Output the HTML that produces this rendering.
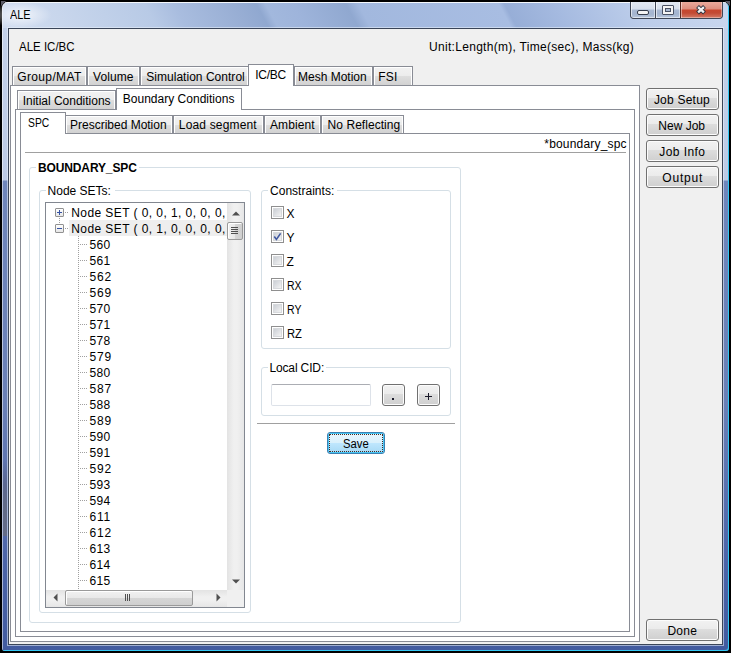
<!DOCTYPE html>
<html><head><meta charset="utf-8"><style>
html,body{margin:0;padding:0;}
.tx{position:absolute;white-space:nowrap;}
body{width:731px;height:653px;position:relative;overflow:hidden;background:#000;font-family:"Liberation Sans",sans-serif;font-size:12px;}
</style></head><body><div style="position:absolute;left:2px;top:2px;width:727px;height:649px;border-radius:6px 6px 3px 3px;overflow:hidden;background:linear-gradient(to bottom,#c4d2ea 0px,#bccae5 178px,#6f86bb 179px,#6a80b6 400px,#4c64a8 560px,#425b9f 649px);box-shadow: inset 1px 1px 0 rgba(255,255,255,0.55), inset -1px -1px 0 #34c8f4;"></div><div style="position:absolute;left:3px;top:460px;width:4px;height:76px;box-sizing:border-box;background:linear-gradient(to bottom,rgba(90,105,160,0) 0px,#5c6890 25px,#616a86 45px,#646c88 75px);"></div><div style="position:absolute;left:1px;top:1px;width:0;height:0;border-top:5px solid #5a5a66;border-right:5px solid transparent"></div><div style="position:absolute;left:725px;top:1px;width:0;height:0;border-top:5px solid #5a5a66;border-left:5px solid transparent"></div><div style="position:absolute;left:3px;top:3px;width:725px;height:25px;border-radius:5px 5px 0 0;background:linear-gradient(62deg,#d0dcf0 3px,#c8d6ec 56px,#b8cae6 136px,#a9bddf 162px,#98aed4 215px,#90a8d0 235px,#a2b8dd 243px,#9eb4db 268px,#90a8d0 314px,#a2b8de 325px,#a8bde2 449px,#97aed7 454px,#a5bae0 498px,#bccdea 568px,#c8d6ee 643px);"></div><div style="position:absolute;left:-10px;top:0px;width:70px;height:30px;background:radial-gradient(ellipse 32px 13px at 30px 15px,rgba(255,255,255,0.75),rgba(255,255,255,0) 100%);"></div><div style="position:absolute;left:5px;top:2px;width:721px;height:1px;box-sizing:border-box;background:rgba(255,255,255,0.6);"></div><div style="position:absolute;left:7px;top:27px;width:717px;height:619px;box-sizing:border-box;border:1px solid rgba(235,242,252,0.55);"></div><div style="position:absolute;left:8px;top:28px;width:715px;height:617px;box-sizing:border-box;border:1px solid #3a4558;background:#f0f0f0;"></div><div id="t0" class="tx" style="left:9.70px;top:9.42px;font-size:12.5px;line-height:12.5px;transform:scaleX(0.8723);transform-origin:0 0;color:#000">ALE</div><div style="position:absolute;left:630px;top:2px;width:93px;height:17px;box-sizing:border-box;border:1px solid #3e4656;border-top:none;border-radius:0 0 4px 4px;overflow:hidden;background:#3e4656"><div style="position:absolute;left:0;top:0;width:24px;height:16px;background:linear-gradient(to bottom,#e3e9f3 0px,#d6dfec 7px,#a9b9d3 8px,#a3b4cf 12px,#b9c7dd 16px);box-shadow:inset 1px 0 0 rgba(255,255,255,.6),inset -1px -1px 0 rgba(255,255,255,.5)"></div><div style="position:absolute;left:25px;top:0;width:24px;height:16px;background:linear-gradient(to bottom,#e3e9f3 0px,#d6dfec 7px,#a9b9d3 8px,#a3b4cf 12px,#b9c7dd 16px);box-shadow:inset 1px 0 0 rgba(255,255,255,.6),inset -1px -1px 0 rgba(255,255,255,.5)"></div><div style="position:absolute;left:49px;top:0;width:1px;height:16px;background:#5a2a22"></div><div style="position:absolute;left:50px;top:0;width:41px;height:16px;background:linear-gradient(to bottom,#e9aa9c 0px,#dc8e7e 7px,#c7472f 8px,#c24a34 11px,#d47a66 16px);box-shadow:inset 1px 0 0 rgba(255,255,255,.45),inset -1px -1px 0 rgba(255,255,255,.35)"></div></div><div style="position:absolute;left:637px;top:10px;width:12px;height:5px;box-sizing:border-box;background:#f4f4f4;border:1px solid #343c4c;border-radius:2px;"></div><div style="position:absolute;left:662px;top:5px;width:12px;height:10px;box-sizing:border-box;border:1px solid #4a5264;background:#f4f4f4;border-radius:1px;"></div><div style="position:absolute;left:665px;top:8px;width:6px;height:4px;box-sizing:border-box;border:1px solid #4a5264;background:#a8b8d0;"></div><svg style="position:absolute;left:694px;top:3px" width="15" height="14" viewBox="0 0 15 14"><path d="M3.5 3.5 L10.5 10 M10.5 3.5 L3.5 10" stroke="#2f3440" stroke-width="4.2" fill="none" stroke-linecap="butt"/><path d="M4.1 4.1 L9.9 9.4 M9.9 4.1 L4.1 9.4" stroke="#f2f2f2" stroke-width="2.3" fill="none" stroke-linecap="butt"/></svg><div id="t1" class="tx" style="left:19.40px;top:41.34px;font-size:12px;line-height:12px;transform:scaleX(0.9580);transform-origin:0 0;color:#000">ALE IC/BC</div><div id="t2" class="tx" style="left:429.10px;top:41.24px;font-size:12px;line-height:12px;letter-spacing:0.294px;color:#000">Unit:Length(m), Time(sec), Mass(kg)</div><div style="position:absolute;left:10px;top:85px;width:630px;height:557px;box-sizing:border-box;border:1px solid #898c95;background:#fff;"></div><div style="position:absolute;left:12px;top:66px;width:75px;height:19px;box-sizing:border-box;border:1px solid #898c95;border-bottom:none;background:linear-gradient(to bottom,#f2f2f2 0px,#ececec 9px,#dedede 9px,#d2d2d2 100%);box-shadow:inset 1px 1px 0 #fff,inset -1px 0 0 #fff;"></div><div id="t3" class="tx" style="left:17.20px;top:70.84px;font-size:12px;line-height:12px;letter-spacing:0.375px;color:#000">Group/MAT</div><div style="position:absolute;left:87px;top:66px;width:53px;height:19px;box-sizing:border-box;border:1px solid #898c95;border-bottom:none;background:linear-gradient(to bottom,#f2f2f2 0px,#ececec 9px,#dedede 9px,#d2d2d2 100%);box-shadow:inset 1px 1px 0 #fff,inset -1px 0 0 #fff;"></div><div id="t4" class="tx" style="left:93.10px;top:70.84px;font-size:12px;line-height:12px;letter-spacing:0.080px;color:#000">Volume</div><div style="position:absolute;left:140px;top:66px;width:109px;height:19px;box-sizing:border-box;border:1px solid #898c95;border-bottom:none;background:linear-gradient(to bottom,#f2f2f2 0px,#ececec 9px,#dedede 9px,#d2d2d2 100%);box-shadow:inset 1px 1px 0 #fff,inset -1px 0 0 #fff;"></div><div id="t5" class="tx" style="left:146.30px;top:70.84px;font-size:12px;line-height:12px;letter-spacing:0.024px;color:#000">Simulation Control</div><div style="position:absolute;left:294px;top:66px;width:79px;height:19px;box-sizing:border-box;border:1px solid #898c95;border-bottom:none;background:linear-gradient(to bottom,#f2f2f2 0px,#ececec 9px,#dedede 9px,#d2d2d2 100%);box-shadow:inset 1px 1px 0 #fff,inset -1px 0 0 #fff;"></div><div id="t6" class="tx" style="left:298.00px;top:70.84px;font-size:12px;line-height:12px;color:#000">Mesh Motion</div><div style="position:absolute;left:373px;top:66px;width:40px;height:19px;box-sizing:border-box;border:1px solid #898c95;border-bottom:none;background:linear-gradient(to bottom,#f2f2f2 0px,#ececec 9px,#dedede 9px,#d2d2d2 100%);box-shadow:inset 1px 1px 0 #fff,inset -1px 0 0 #fff;"></div><div id="t7" class="tx" style="left:378.20px;top:70.84px;font-size:12px;line-height:12px;letter-spacing:0.300px;color:#000">FSI</div><div style="position:absolute;left:248px;top:64px;width:46px;height:22px;box-sizing:border-box;border:1px solid #898c95;border-bottom:none;background:#fff;"></div><div id="t8" class="tx" style="left:255.20px;top:68.84px;font-size:12px;line-height:12px;letter-spacing:-0.250px;color:#000">IC/BC</div><div style="position:absolute;left:15px;top:109px;width:620px;height:528px;box-sizing:border-box;border:1px solid #898c95;background:#fff;"></div><div style="position:absolute;left:17px;top:90px;width:99px;height:19px;box-sizing:border-box;border:1px solid #898c95;border-bottom:none;background:linear-gradient(to bottom,#f2f2f2 0px,#ececec 9px,#dedede 9px,#d2d2d2 100%);box-shadow:inset 1px 1px 0 #fff,inset -1px 0 0 #fff;"></div><div id="t9" class="tx" style="left:22.70px;top:95.34px;font-size:12px;line-height:12px;letter-spacing:-0.011px;color:#000">Initial Conditions</div><div style="position:absolute;left:116px;top:88px;width:126px;height:22px;box-sizing:border-box;border:1px solid #898c95;border-bottom:none;background:#fff;"></div><div id="t10" class="tx" style="left:122.80px;top:93.34px;font-size:12px;line-height:12px;letter-spacing:0.011px;color:#000">Boundary Conditions</div><div style="position:absolute;left:20px;top:133px;width:610px;height:499px;box-sizing:border-box;border:1px solid #898c95;background:#fff;"></div><div style="position:absolute;left:65px;top:115px;width:108px;height:18px;box-sizing:border-box;border:1px solid #898c95;border-bottom:none;background:linear-gradient(to bottom,#f2f2f2 0px,#ececec 9px,#dedede 9px,#d2d2d2 100%);box-shadow:inset 1px 1px 0 #fff,inset -1px 0 0 #fff;"></div><div id="t11" class="tx" style="left:70.10px;top:118.94px;font-size:12px;line-height:12px;letter-spacing:-0.012px;color:#000">Prescribed Motion</div><div style="position:absolute;left:173px;top:115px;width:91px;height:18px;box-sizing:border-box;border:1px solid #898c95;border-bottom:none;background:linear-gradient(to bottom,#f2f2f2 0px,#ececec 9px,#dedede 9px,#d2d2d2 100%);box-shadow:inset 1px 1px 0 #fff,inset -1px 0 0 #fff;"></div><div id="t12" class="tx" style="left:178.80px;top:118.94px;font-size:12px;line-height:12px;letter-spacing:0.164px;color:#000">Load segment</div><div style="position:absolute;left:264px;top:115px;width:57px;height:18px;box-sizing:border-box;border:1px solid #898c95;border-bottom:none;background:linear-gradient(to bottom,#f2f2f2 0px,#ececec 9px,#dedede 9px,#d2d2d2 100%);box-shadow:inset 1px 1px 0 #fff,inset -1px 0 0 #fff;"></div><div id="t13" class="tx" style="left:270.00px;top:118.94px;font-size:12px;line-height:12px;letter-spacing:0.100px;color:#000">Ambient</div><div style="position:absolute;left:321px;top:115px;width:83px;height:18px;box-sizing:border-box;border:1px solid #898c95;border-bottom:none;background:linear-gradient(to bottom,#f2f2f2 0px,#ececec 9px,#dedede 9px,#d2d2d2 100%);box-shadow:inset 1px 1px 0 #fff,inset -1px 0 0 #fff;"></div><div id="t14" class="tx" style="left:327.60px;top:118.94px;font-size:12px;line-height:12px;letter-spacing:0.050px;color:#000">No Reflecting</div><div style="position:absolute;left:20px;top:112px;width:46px;height:22px;box-sizing:border-box;border:1px solid #898c95;border-bottom:none;background:#fff;"></div><div id="t15" class="tx" style="left:28.10px;top:117.44px;font-size:12px;line-height:12px;transform:scaleX(0.8595);transform-origin:0 0;color:#000">SPC</div><div id="t16" class="tx" style="left:544.30px;top:137.64px;font-size:12px;line-height:12px;letter-spacing:0.183px;color:#000">*boundary_spc</div><div style="position:absolute;left:25px;top:152px;width:601px;height:1px;box-sizing:border-box;background:#a0a0a0;"></div><div style="position:absolute;left:29px;top:167px;width:432px;height:456px;box-sizing:border-box;border:1px solid #d5dfe6;border-radius:3px;"></div><div style="position:absolute;left:36px;top:166px;width:103px;height:3px;box-sizing:border-box;background:#fff;"></div><div id="t17" class="tx" style="left:38.00px;top:161.54px;font-size:12px;line-height:12px;letter-spacing:-0.128px;font-weight:bold;color:#000">BOUNDARY_SPC</div><div style="position:absolute;left:39px;top:190px;width:212px;height:423px;box-sizing:border-box;border:1px solid #d5dfe6;border-radius:3px;"></div><div style="position:absolute;left:46px;top:189px;width:69px;height:3px;box-sizing:border-box;background:#fff;"></div><div id="t18" class="tx" style="left:47.60px;top:184.54px;font-size:12px;line-height:12px;color:#000">Node SETs:</div><div style="position:absolute;left:261px;top:190px;width:190px;height:159px;box-sizing:border-box;border:1px solid #d5dfe6;border-radius:3px;"></div><div style="position:absolute;left:268px;top:189px;width:69px;height:3px;box-sizing:border-box;background:#fff;"></div><div id="t19" class="tx" style="left:270.00px;top:184.54px;font-size:12px;line-height:12px;letter-spacing:0.019px;color:#000">Constraints:</div><div style="position:absolute;left:261px;top:367px;width:190px;height:49px;box-sizing:border-box;border:1px solid #d5dfe6;border-radius:3px;"></div><div style="position:absolute;left:268px;top:366px;width:58px;height:3px;box-sizing:border-box;background:#fff;"></div><div id="t20" class="tx" style="left:269.40px;top:361.64px;font-size:12px;line-height:12px;letter-spacing:-0.133px;color:#000">Local CID:</div><div style="position:absolute;left:45px;top:202px;width:200px;height:406px;box-sizing:border-box;border:1px solid #828790;background:#fff;"></div><div style="position:absolute;left:69px;top:220px;width:158px;height:16px;box-sizing:border-box;background:#eeeeee;"></div><div style="position:absolute;left:55px;top:208px;width:9px;height:9px;box-sizing:border-box;border:1px solid #919191;border-radius:1px;background:linear-gradient(#fff,#e6e6e6);"></div><div style="position:absolute;left:57px;top:212px;width:5px;height:1px;box-sizing:border-box;background:#3552a3;"></div><div style="position:absolute;left:59px;top:210px;width:1px;height:5px;box-sizing:border-box;background:#3552a3;"></div><div style="position:absolute;left:55px;top:224px;width:9px;height:9px;box-sizing:border-box;border:1px solid #919191;border-radius:1px;background:linear-gradient(#fff,#e6e6e6);"></div><div style="position:absolute;left:57px;top:228px;width:5px;height:1px;box-sizing:border-box;background:#3552a3;"></div><div style="position:absolute;left:65px;top:212px;width:3px;height:1px;background:repeating-linear-gradient(to right,#a0a0a0 0,#a0a0a0 1px,transparent 1px,transparent 2px)"></div><div style="position:absolute;left:65px;top:228px;width:3px;height:1px;background:repeating-linear-gradient(to right,#a0a0a0 0,#a0a0a0 1px,transparent 1px,transparent 2px)"></div><div style="position:absolute;left:59px;top:218px;width:1px;height:5px;background:repeating-linear-gradient(to bottom,#a0a0a0 0,#a0a0a0 1px,transparent 1px,transparent 2px)"></div><div style="position:absolute;left:78px;top:236px;width:1px;height:354px;background:repeating-linear-gradient(to bottom,#a0a0a0 0,#a0a0a0 1px,transparent 1px,transparent 2px)"></div><div style="position:absolute;left:80px;top:244px;width:7px;height:1px;background:repeating-linear-gradient(to right,#a0a0a0 0,#a0a0a0 1px,transparent 1px,transparent 2px)"></div><div id="t21" class="tx" style="left:89.50px;top:238.54px;font-size:12px;line-height:12px;letter-spacing:0.300px;color:#000">560</div><div style="position:absolute;left:80px;top:260px;width:7px;height:1px;background:repeating-linear-gradient(to right,#a0a0a0 0,#a0a0a0 1px,transparent 1px,transparent 2px)"></div><div id="t22" class="tx" style="left:89.50px;top:254.54px;font-size:12px;line-height:12px;letter-spacing:0.300px;color:#000">561</div><div style="position:absolute;left:80px;top:276px;width:7px;height:1px;background:repeating-linear-gradient(to right,#a0a0a0 0,#a0a0a0 1px,transparent 1px,transparent 2px)"></div><div id="t23" class="tx" style="left:89.50px;top:270.54px;font-size:12px;line-height:12px;letter-spacing:0.800px;color:#000">562</div><div style="position:absolute;left:80px;top:292px;width:7px;height:1px;background:repeating-linear-gradient(to right,#a0a0a0 0,#a0a0a0 1px,transparent 1px,transparent 2px)"></div><div id="t24" class="tx" style="left:89.50px;top:286.54px;font-size:12px;line-height:12px;letter-spacing:0.800px;color:#000">569</div><div style="position:absolute;left:80px;top:308px;width:7px;height:1px;background:repeating-linear-gradient(to right,#a0a0a0 0,#a0a0a0 1px,transparent 1px,transparent 2px)"></div><div id="t25" class="tx" style="left:89.50px;top:302.54px;font-size:12px;line-height:12px;letter-spacing:0.300px;color:#000">570</div><div style="position:absolute;left:80px;top:324px;width:7px;height:1px;background:repeating-linear-gradient(to right,#a0a0a0 0,#a0a0a0 1px,transparent 1px,transparent 2px)"></div><div id="t26" class="tx" style="left:89.50px;top:318.54px;font-size:12px;line-height:12px;letter-spacing:0.300px;color:#000">571</div><div style="position:absolute;left:80px;top:340px;width:7px;height:1px;background:repeating-linear-gradient(to right,#a0a0a0 0,#a0a0a0 1px,transparent 1px,transparent 2px)"></div><div id="t27" class="tx" style="left:89.50px;top:334.54px;font-size:12px;line-height:12px;letter-spacing:0.300px;color:#000">578</div><div style="position:absolute;left:80px;top:356px;width:7px;height:1px;background:repeating-linear-gradient(to right,#a0a0a0 0,#a0a0a0 1px,transparent 1px,transparent 2px)"></div><div id="t28" class="tx" style="left:89.50px;top:350.54px;font-size:12px;line-height:12px;letter-spacing:0.800px;color:#000">579</div><div style="position:absolute;left:80px;top:372px;width:7px;height:1px;background:repeating-linear-gradient(to right,#a0a0a0 0,#a0a0a0 1px,transparent 1px,transparent 2px)"></div><div id="t29" class="tx" style="left:89.50px;top:366.54px;font-size:12px;line-height:12px;letter-spacing:0.300px;color:#000">580</div><div style="position:absolute;left:80px;top:388px;width:7px;height:1px;background:repeating-linear-gradient(to right,#a0a0a0 0,#a0a0a0 1px,transparent 1px,transparent 2px)"></div><div id="t30" class="tx" style="left:89.50px;top:382.54px;font-size:12px;line-height:12px;letter-spacing:0.800px;color:#000">587</div><div style="position:absolute;left:80px;top:404px;width:7px;height:1px;background:repeating-linear-gradient(to right,#a0a0a0 0,#a0a0a0 1px,transparent 1px,transparent 2px)"></div><div id="t31" class="tx" style="left:89.50px;top:398.54px;font-size:12px;line-height:12px;letter-spacing:0.300px;color:#000">588</div><div style="position:absolute;left:80px;top:420px;width:7px;height:1px;background:repeating-linear-gradient(to right,#a0a0a0 0,#a0a0a0 1px,transparent 1px,transparent 2px)"></div><div id="t32" class="tx" style="left:89.50px;top:414.54px;font-size:12px;line-height:12px;letter-spacing:0.800px;color:#000">589</div><div style="position:absolute;left:80px;top:436px;width:7px;height:1px;background:repeating-linear-gradient(to right,#a0a0a0 0,#a0a0a0 1px,transparent 1px,transparent 2px)"></div><div id="t33" class="tx" style="left:89.50px;top:430.54px;font-size:12px;line-height:12px;letter-spacing:0.300px;color:#000">590</div><div style="position:absolute;left:80px;top:452px;width:7px;height:1px;background:repeating-linear-gradient(to right,#a0a0a0 0,#a0a0a0 1px,transparent 1px,transparent 2px)"></div><div id="t34" class="tx" style="left:89.50px;top:446.54px;font-size:12px;line-height:12px;letter-spacing:0.300px;color:#000">591</div><div style="position:absolute;left:80px;top:468px;width:7px;height:1px;background:repeating-linear-gradient(to right,#a0a0a0 0,#a0a0a0 1px,transparent 1px,transparent 2px)"></div><div id="t35" class="tx" style="left:89.50px;top:462.54px;font-size:12px;line-height:12px;letter-spacing:0.800px;color:#000">592</div><div style="position:absolute;left:80px;top:484px;width:7px;height:1px;background:repeating-linear-gradient(to right,#a0a0a0 0,#a0a0a0 1px,transparent 1px,transparent 2px)"></div><div id="t36" class="tx" style="left:89.50px;top:478.54px;font-size:12px;line-height:12px;letter-spacing:0.300px;color:#000">593</div><div style="position:absolute;left:80px;top:500px;width:7px;height:1px;background:repeating-linear-gradient(to right,#a0a0a0 0,#a0a0a0 1px,transparent 1px,transparent 2px)"></div><div id="t37" class="tx" style="left:89.50px;top:494.54px;font-size:12px;line-height:12px;letter-spacing:0.300px;color:#000">594</div><div style="position:absolute;left:80px;top:516px;width:7px;height:1px;background:repeating-linear-gradient(to right,#a0a0a0 0,#a0a0a0 1px,transparent 1px,transparent 2px)"></div><div id="t38" class="tx" style="left:89.50px;top:510.54px;font-size:12px;line-height:12px;letter-spacing:0.800px;color:#000">611</div><div style="position:absolute;left:80px;top:532px;width:7px;height:1px;background:repeating-linear-gradient(to right,#a0a0a0 0,#a0a0a0 1px,transparent 1px,transparent 2px)"></div><div id="t39" class="tx" style="left:89.50px;top:526.54px;font-size:12px;line-height:12px;letter-spacing:0.800px;color:#000">612</div><div style="position:absolute;left:80px;top:548px;width:7px;height:1px;background:repeating-linear-gradient(to right,#a0a0a0 0,#a0a0a0 1px,transparent 1px,transparent 2px)"></div><div id="t40" class="tx" style="left:89.50px;top:542.54px;font-size:12px;line-height:12px;letter-spacing:0.300px;color:#000">613</div><div style="position:absolute;left:80px;top:564px;width:7px;height:1px;background:repeating-linear-gradient(to right,#a0a0a0 0,#a0a0a0 1px,transparent 1px,transparent 2px)"></div><div id="t41" class="tx" style="left:89.50px;top:558.54px;font-size:12px;line-height:12px;letter-spacing:0.300px;color:#000">614</div><div style="position:absolute;left:80px;top:580px;width:7px;height:1px;background:repeating-linear-gradient(to right,#a0a0a0 0,#a0a0a0 1px,transparent 1px,transparent 2px)"></div><div id="t42" class="tx" style="left:89.50px;top:574.54px;font-size:12px;line-height:12px;letter-spacing:0.300px;color:#000">615</div><div style="position:absolute;left:46px;top:203px;width:181px;height:387px;overflow:hidden"><div id="t43" class="tx" style="left:25.20px;top:3.64px;font-size:12px;line-height:12px;letter-spacing:0.430px;color:#000">Node SET ( 0, 0, 1, 0, 0, 0, 0 )</div><div id="t44" class="tx" style="left:25.20px;top:19.64px;font-size:12px;line-height:12px;letter-spacing:0.430px;color:#000">Node SET ( 0, 1, 0, 0, 0, 0, 0 )</div></div><div style="position:absolute;left:227px;top:203px;width:17px;height:387px;box-sizing:border-box;background:linear-gradient(to right,#e3e3e3,#f0f0f0 40%,#f0f0f0 60%,#e6e6e6);"></div><svg style="position:absolute;left:232px;top:211px" width="8" height="5"><path d="M0 4.5 L4 0.5 L8 4.5 Z" fill="#505050"/></svg><svg style="position:absolute;left:232px;top:579px" width="8" height="5"><path d="M0 0.5 L4 4.5 L8 0.5 Z" fill="#505050"/></svg><div style="position:absolute;left:227px;top:222px;width:16px;height:18px;box-sizing:border-box;border:1px solid #9a9a9a;border-radius:2px;background:linear-gradient(to right,#f2f2f2,#e8e8e8 50%,#d6d6d6 51%,#cfcfcf);box-shadow:inset 1px 1px 0 #fff;"></div><div style="position:absolute;left:231px;top:227px;width:7px;height:1px;box-sizing:border-box;background:#505050;"></div><div style="position:absolute;left:231px;top:229px;width:7px;height:1px;box-sizing:border-box;background:#505050;"></div><div style="position:absolute;left:231px;top:231px;width:7px;height:1px;box-sizing:border-box;background:#505050;"></div><div style="position:absolute;left:231px;top:233px;width:7px;height:1px;box-sizing:border-box;background:#505050;"></div><div style="position:absolute;left:46px;top:590px;width:181px;height:17px;box-sizing:border-box;background:linear-gradient(to bottom,#e3e3e3,#f0f0f0 40%,#f0f0f0 60%,#e6e6e6);"></div><div style="position:absolute;left:227px;top:590px;width:17px;height:17px;box-sizing:border-box;background:#f0f0f0;"></div><svg style="position:absolute;left:53px;top:593px" width="6" height="9"><path d="M4.5 0.5 L0.5 4.5 L4.5 8.5 Z" fill="#505050"/></svg><svg style="position:absolute;left:216px;top:593px" width="6" height="9"><path d="M0.5 0.5 L4.5 4.5 L0.5 8.5 Z" fill="#505050"/></svg><div style="position:absolute;left:65px;top:590px;width:128px;height:16px;box-sizing:border-box;border:1px solid #9a9a9a;border-radius:2px;background:linear-gradient(to bottom,#f2f2f2,#e8e8e8 50%,#d6d6d6 51%,#cfcfcf);box-shadow:inset 1px 1px 0 #fff;"></div><div style="position:absolute;left:125px;top:594px;width:1px;height:7px;box-sizing:border-box;background:#505050;"></div><div style="position:absolute;left:127px;top:594px;width:1px;height:7px;box-sizing:border-box;background:#505050;"></div><div style="position:absolute;left:129px;top:594px;width:1px;height:7px;box-sizing:border-box;background:#505050;"></div><div style="position:absolute;left:271px;top:206px;width:13px;height:13px;box-sizing:border-box;border:1px solid #8f8f8f;background:#fff;"></div><div style="position:absolute;left:273px;top:208px;width:9px;height:9px;box-sizing:border-box;background:linear-gradient(135deg,#cbcfd5,#f3f3f3);border:1px solid #d7d9dc;"></div><div id="t45" class="tx" style="left:286.50px;top:207.74px;font-size:12px;line-height:12px;color:#000">X</div><div style="position:absolute;left:271px;top:230px;width:13px;height:13px;box-sizing:border-box;border:1px solid #8f8f8f;background:#fff;"></div><div style="position:absolute;left:273px;top:232px;width:9px;height:9px;box-sizing:border-box;background:linear-gradient(135deg,#cbcfd5,#f3f3f3);border:1px solid #d7d9dc;"></div><div id="t46" class="tx" style="left:286.50px;top:231.74px;font-size:12px;line-height:12px;color:#000">Y</div><div style="position:absolute;left:271px;top:254px;width:13px;height:13px;box-sizing:border-box;border:1px solid #8f8f8f;background:#fff;"></div><div style="position:absolute;left:273px;top:256px;width:9px;height:9px;box-sizing:border-box;background:linear-gradient(135deg,#cbcfd5,#f3f3f3);border:1px solid #d7d9dc;"></div><div id="t47" class="tx" style="left:286.50px;top:255.74px;font-size:12px;line-height:12px;color:#000">Z</div><div style="position:absolute;left:271px;top:278px;width:13px;height:13px;box-sizing:border-box;border:1px solid #8f8f8f;background:#fff;"></div><div style="position:absolute;left:273px;top:280px;width:9px;height:9px;box-sizing:border-box;background:linear-gradient(135deg,#cbcfd5,#f3f3f3);border:1px solid #d7d9dc;"></div><div id="t48" class="tx" style="left:286.50px;top:279.74px;font-size:12px;line-height:12px;transform:scaleX(0.8750);transform-origin:0 0;color:#000">RX</div><div style="position:absolute;left:271px;top:302px;width:13px;height:13px;box-sizing:border-box;border:1px solid #8f8f8f;background:#fff;"></div><div style="position:absolute;left:273px;top:304px;width:9px;height:9px;box-sizing:border-box;background:linear-gradient(135deg,#cbcfd5,#f3f3f3);border:1px solid #d7d9dc;"></div><div id="t49" class="tx" style="left:286.50px;top:303.74px;font-size:12px;line-height:12px;transform:scaleX(0.8750);transform-origin:0 0;color:#000">RY</div><div style="position:absolute;left:271px;top:326px;width:13px;height:13px;box-sizing:border-box;border:1px solid #8f8f8f;background:#fff;"></div><div style="position:absolute;left:273px;top:328px;width:9px;height:9px;box-sizing:border-box;background:linear-gradient(135deg,#cbcfd5,#f3f3f3);border:1px solid #d7d9dc;"></div><div id="t50" class="tx" style="left:286.50px;top:327.74px;font-size:12px;line-height:12px;transform:scaleX(0.9333);transform-origin:0 0;color:#000">RZ</div><svg style="position:absolute;left:272px;top:231px" width="11" height="11"><path d="M2.3 5.6 L4.4 8.4 L8.6 2.4" stroke="#4058a0" stroke-width="1.6" fill="none"/></svg><div style="position:absolute;left:271px;top:384px;width:100px;height:22px;box-sizing:border-box;border:1px solid #dde2e9;border-top-color:#abadb3;background:#fff;border-radius:2px;"></div><div style="position:absolute;left:382px;top:384px;width:23px;height:22px;box-sizing:border-box;border:1px solid #707070;border-radius:3px;background:linear-gradient(to bottom,#f2f2f2 0%,#ebebeb 45%,#dddddd 46%,#cfcfcf 100%);box-shadow:inset 0 0 0 1px #fcfcfc;"></div><div style="position:absolute;left:392px;top:398px;width:2px;height:2px;box-sizing:border-box;background:#1a1a2a;"></div><div style="position:absolute;left:417px;top:384px;width:23px;height:22px;box-sizing:border-box;border:1px solid #707070;border-radius:3px;background:linear-gradient(to bottom,#f2f2f2 0%,#ebebeb 45%,#dddddd 46%,#cfcfcf 100%);box-shadow:inset 0 0 0 1px #fcfcfc;"></div><div style="position:absolute;left:425px;top:396px;width:7px;height:1px;box-sizing:border-box;background:#1a1a2a;"></div><div style="position:absolute;left:428px;top:393px;width:1px;height:7px;box-sizing:border-box;background:#1a1a2a;"></div><div style="position:absolute;left:257px;top:423px;width:198px;height:1px;box-sizing:border-box;background:#a0a0a0;"></div><div style="position:absolute;left:327px;top:432px;width:58px;height:22px;box-sizing:border-box;border:1px solid #3c7fb1;border-radius:3px;background:linear-gradient(to bottom,#eaf6fd 0%,#d9f0fc 48%,#bee6fd 52%,#a7d9f5 100%);box-shadow:inset 0 0 0 1px #48c6f5;"></div><div style="position:absolute;left:329px;top:434px;width:54px;height:18px;box-sizing:border-box;border:1px dotted #4a2a20;"></div><div id="t51" class="tx" style="left:343.00px;top:438.44px;font-size:12px;line-height:12px;transform:scaleX(0.9391);transform-origin:0 0;color:#000">Save</div><div style="position:absolute;left:646px;top:88px;width:73px;height:22px;box-sizing:border-box;border:1px solid #707070;border-radius:3px;background:linear-gradient(to bottom,#f2f2f2 0%,#ebebeb 45%,#dddddd 46%,#cfcfcf 100%);box-shadow:inset 0 0 0 1px #fcfcfc;"></div><div id="t52" class="tx" style="left:653.90px;top:93.84px;font-size:12px;line-height:12px;letter-spacing:0.224px;color:#000">Job Setup</div><div style="position:absolute;left:646px;top:114px;width:73px;height:22px;box-sizing:border-box;border:1px solid #707070;border-radius:3px;background:linear-gradient(to bottom,#f2f2f2 0%,#ebebeb 45%,#dddddd 46%,#cfcfcf 100%);box-shadow:inset 0 0 0 1px #fcfcfc;"></div><div id="t53" class="tx" style="left:658.30px;top:119.64px;font-size:12px;line-height:12px;color:#000">New Job</div><div style="position:absolute;left:646px;top:140px;width:73px;height:22px;box-sizing:border-box;border:1px solid #707070;border-radius:3px;background:linear-gradient(to bottom,#f2f2f2 0%,#ebebeb 45%,#dddddd 46%,#cfcfcf 100%);box-shadow:inset 0 0 0 1px #fcfcfc;"></div><div id="t54" class="tx" style="left:659.30px;top:145.84px;font-size:12px;line-height:12px;letter-spacing:0.429px;color:#000">Job Info</div><div style="position:absolute;left:646px;top:166px;width:73px;height:22px;box-sizing:border-box;border:1px solid #707070;border-radius:3px;background:linear-gradient(to bottom,#f2f2f2 0%,#ebebeb 45%,#dddddd 46%,#cfcfcf 100%);box-shadow:inset 0 0 0 1px #fcfcfc;"></div><div id="t55" class="tx" style="left:662.30px;top:171.64px;font-size:12px;line-height:12px;letter-spacing:0.800px;color:#000">Output</div><div style="position:absolute;left:646px;top:619px;width:73px;height:22px;box-sizing:border-box;border:1px solid #707070;border-radius:3px;background:linear-gradient(to bottom,#f2f2f2 0%,#ebebeb 45%,#dddddd 46%,#cfcfcf 100%);box-shadow:inset 0 0 0 1px #fcfcfc;"></div><div id="t56" class="tx" style="left:667.40px;top:624.64px;font-size:12px;line-height:12px;letter-spacing:0.267px;color:#000">Done</div></body></html>
